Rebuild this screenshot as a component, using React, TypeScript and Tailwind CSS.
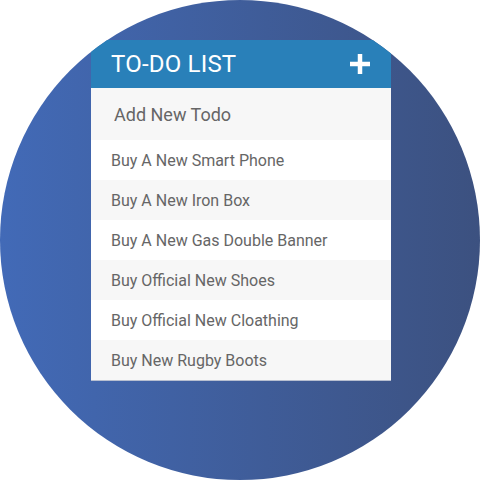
const TODOS = [
  'Buy A New Smart Phone',
  'Buy A New Iron Box',
  'Buy A New Gas Double Banner',
  'Buy Official New Shoes',
  'Buy Official New Cloathing',
  'Buy New Rugby Boots',
];

export default function App() {
  return (
    <div className="w-[480px] h-[480px] bg-white font-['Roboto',sans-serif]">
      <div className="w-[480px] h-[480px] rounded-full overflow-hidden bg-gradient-to-r from-[#426ab7] to-[#3c5180] flex justify-center pt-[40px]">
        <div className="w-[300px] ml-[2px] self-start">
          {/* Header */}
          <div className="h-[48px] bg-[#2980b9] flex items-center justify-between pl-[20px] pr-[20px]">
            <h1 className="text-[24px] text-white leading-none tracking-[0.2px]">TO-DO LIST</h1>
            <svg width="22" height="22" viewBox="0 0 22 22">
              <path d="M11 1v20M1 11h20" stroke="white" strokeWidth="4.5" />
            </svg>
          </div>

          {/* Input */}
          <input
            className="w-full h-[52px] bg-[#f7f7f7] px-[23px] pt-[1px] text-[18px] text-[#666] placeholder:text-[#666] outline-none"
            placeholder="Add New Todo"
          />

          {/* Items */}
          <ul className="border-b border-[#b8bfd0]">
            {TODOS.map((t, i) => (
              <li
                key={t}
                className={`h-[40px] flex items-center pl-[20px] pt-[1px] text-[16px] text-[#666] ${i % 2 === 0 ? 'bg-white' : 'bg-[#f7f7f7]'}`}
              >
                {t}
              </li>
            ))}
          </ul>
        </div>
      </div>
    </div>
  );
}
